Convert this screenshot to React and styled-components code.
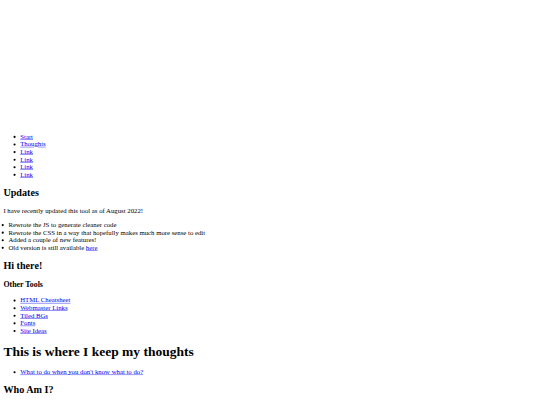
import React from "react"
import styled, {createGlobalStyle} from "styled-components"

const GlobalStyle = createGlobalStyle`
  html, body {
    margin: 0;
    background: #ffffff;
    overflow: hidden;
  }
`

// the whole page is drawn at desktop size and shrunk down
const Page = styled.div`
  width: 1280px;
  box-sizing: border-box;
  transform: scale(0.421875);
  transform-origin: 0 0;
  padding: 8px;
  font-family: "Liberation Serif", "Times New Roman", serif;
  font-size: 16px;
  color: #000000;
`

const Banner = styled.header`
  height: 291px;
`

const List = styled.ul`
  margin: 16px 0;
  padding-left: ${p => (p.$flush ? "12px" : "40px")};
  list-style: disc outside;
`

const Item = styled.li`
  line-height: normal;
`

const Anchor = styled.a`
  color: #0000ee;
  text-decoration: underline;
`

const PageTitle = styled.h1`
  font-size: 32px;
  font-weight: bold;
  margin: 21.44px 0;
`

const SectionTitle = styled.h2`
  font-size: 24px;
  font-weight: bold;
  margin: 19.92px 0;
`

const SubTitle = styled.h3`
  font-size: 18.72px;
  font-weight: bold;
  margin: 18.72px 0;
`

const Text = styled.p`
  margin: 16px 0;
`

const navLinks = ["Start", "Thoughts", "Link", "Link", "Link", "Link"]
const tools = ["HTML Cheatsheet", "Webmaster Links", "Tiled BGs", "Fonts", "Site Ideas"]

const App = () => {
  return (
    <>
      <GlobalStyle/>
      <Page>
        <Banner/>
        <List>
          {navLinks.map((label, i) => (
            <Item key={i}><Anchor href="#">{label}</Anchor></Item>
          ))}
        </List>

        <SectionTitle>Updates</SectionTitle>
        <Text>I have recently updated this tool as of August 2022!</Text>
        <List $flush>
          <Item>Rewrote the JS to generate cleaner code</Item>
          <Item>Rewrote the CSS in a way that hopefully makes much more sense to edit</Item>
          <Item>Added a couple of new features!</Item>
          <Item>Old version is still available <Anchor href="#">here</Anchor></Item>
        </List>

        <SectionTitle>Hi there!</SectionTitle>
        <SubTitle>Other Tools</SubTitle>
        <List>
          {tools.map(label => (
            <Item key={label}><Anchor href="#">{label}</Anchor></Item>
          ))}
        </List>

        <PageTitle>This is where I keep my thoughts</PageTitle>
        <List>
          <Item><Anchor href="#">What to do when you don't know what to do?</Anchor></Item>
        </List>

        <SectionTitle>Who Am I?</SectionTitle>
      </Page>
    </>
  )
}

export default App
